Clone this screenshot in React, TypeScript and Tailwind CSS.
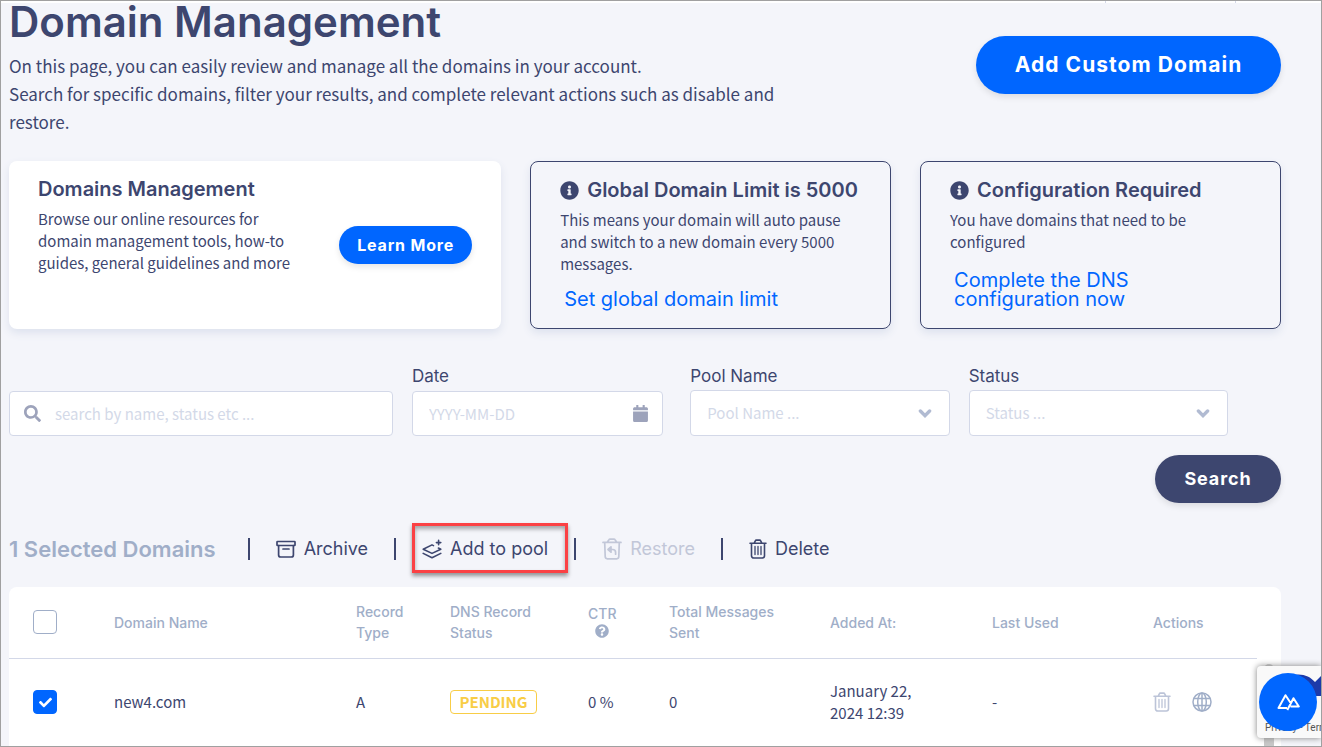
import { useState } from "react";
import type { ReactNode } from "react";
import { FaCalendar, FaCheck, FaInfoCircle, FaQuestionCircle, FaSearch } from "react-icons/fa";

const HEADERS = ["Domain Name", "Record Type", "DNS Record Status", "CTR", "Total Messages Sent", "Added At:", "Last Used", "Actions"];

const DOMAINS = [
    { name: "new4.com", type: "A", status: "PENDING", ctr: "0 %", sent: 0, addedAt: "January 22, 2024 12:39", lastUsed: "-" },
];

function ArchiveIcon() {
    return (
        <svg width="20" height="20" viewBox="0 0 20 20" fill="none" stroke="currentColor" strokeWidth="1.7" strokeLinejoin="round" strokeLinecap="round">
            <rect x="1" y="2.5" width="18" height="4" rx="0.6" />
            <path d="M2.6 6.5v9.5a2 2 0 0 0 2 2h10.8a2 2 0 0 0 2-2V6.5M7 10h6" />
        </svg>
    );
}

function PoolIcon() {
    return (
        <svg width="20" height="20" viewBox="0 0 20 20" fill="none" stroke="currentColor" strokeWidth="1.6" strokeLinejoin="round" strokeLinecap="round">
            <path d="M11.5 6.6 10 5.9 1.2 10.2 10 14.4 18.8 10.2l-2.4-1.1" />
            <path d="M1.2 14.4 10 18.8 18.8 14.4M16.6 1.4v4.4M14.4 3.6h4.4" />
        </svg>
    );
}

function TrashIcon() {
    return (
        <svg width="18" height="20" viewBox="0 0 18 20" fill="none" stroke="currentColor" strokeWidth="1.6" strokeLinejoin="round" strokeLinecap="round">
            <path d="M1 4.2h16M5.2 4.2 6.3 1.9c.2-.5.6-.8 1.1-.8h3.2c.5 0 .9.3 1.1.8l1.1 2.3M2.5 4.2v12.6a2.2 2.2 0 0 0 2.2 2.2h8.6a2.2 2.2 0 0 0 2.2-2.2V4.2" />
            <path d="M6 7.5v8M9 7.5v8M12 7.5v8" strokeWidth="1.3" />
        </svg>
    );
}

function RestoreIcon() {
    return (
        <svg width="20" height="22" viewBox="0 0 20 22" fill="none" stroke="currentColor" strokeWidth="1.7" strokeLinejoin="round" strokeLinecap="round">
            <path d="M1 4.4h18M5.2 4.2 6.8 1.9c.3-.5.8-.8 1.3-.8h3.8c.5 0 1 .3 1.3.8l1.6 2.3M2.7 4.4l.5 14.2c0 1.2.9 2.2 2.1 2.2h9.4c1.2 0 2.1-1 2.1-2.2l.5-14.2" />
            <path d="M9 8.8v5.4L6 11.5z" fill="currentColor" />
            <path d="M9 11.5h1.7c1.8 0 2.9 1.2 2.9 2.9v1.8" />
        </svg>
    );
}

function GlobeIcon() {
    return (
        <svg width="20" height="20" viewBox="0 0 20 20" fill="none" stroke="currentColor" strokeWidth="1.5">
            <circle cx="10" cy="10" r="9" />
            <ellipse cx="10" cy="10" rx="4.3" ry="9" />
            <path d="M2 6.6h16M2 13.4h16M10 1v18" />
        </svg>
    );
}

function Checkbox({ label, checked, onChange }: { label: string; checked: boolean; onChange: () => void }) {
    return (
        <label className="relative block size-6">
            <input
                type="checkbox"
                aria-label={label}
                checked={checked}
                onChange={onChange}
                className="block size-6 appearance-none rounded border border-[#a0aec8] bg-white checked:border-[#0066ff] checked:bg-[#0066ff]"
            />
            {checked && <FaCheck size={13} className="pointer-events-none absolute inset-0 m-auto text-white" />}
        </label>
    );
}

function InfoCard({ title, text, link }: { title: string; text: string; link: string }) {
    return (
        <div className="flex flex-col rounded-lg border border-[#3d466f] px-[29px] pt-4 pb-[19px] shadow-[0_4px_8px_#dde2ee]">
            <h2 className="flex items-center gap-2 text-xl leading-6 font-semibold whitespace-nowrap">
                <FaInfoCircle size={19} className="shrink-0" />
                {title}
            </h2>
            <p className="mt-[7px] font-['Noto_Sans_CJK_SC',sans-serif] text-[15px] leading-[22px]">{text}</p>
            <a href="#" className="mt-auto max-w-[240px] px-1 text-xl leading-[19px] text-[#0066ff]">{link}</a>
        </div>
    );
}

function SelectField({ id, label }: { id: string; label: string }) {
    return (
        <div>
            <label htmlFor={id} className="block text-[17px] leading-7">{label}</label>
            <div className="relative">
                <select
                    id={id}
                    defaultValue=""
                    className="block h-[46px] w-full appearance-none rounded border border-[#d3d8e8] bg-white px-4 font-['Noto_Sans_CJK_SC',sans-serif] text-[15px] text-[#d3d9e8]"
                >
                    <option value="">{label} ...</option>
                </select>
                <svg width="14" height="10" viewBox="0 0 14 10" fill="none" stroke="#b1bbd2" strokeWidth="3.4" className="pointer-events-none absolute inset-y-0 right-[18px] my-auto">
                    <path d="M2.4 3 7 7.6 11.6 3" strokeLinecap="round" />
                </svg>
            </div>
        </div>
    );
}

function Action({ icon, label, disabled, highlighted }: { icon: ReactNode; label: string; disabled?: boolean; highlighted?: boolean }) {
    return (
        <>
            <span className="h-[22px] w-0.5 bg-[#3d466f]" />
            <button disabled={disabled} className="relative flex h-6 items-center gap-2 disabled:text-[#c2c7d8]">
                {icon}
                {label}
                {highlighted && (
                    <span className="pointer-events-none absolute -top-3.5 -right-5 -bottom-3 -left-2.5 border-3 border-[#fb4144] shadow-[0_3px_4px_#0006,inset_0_3px_4px_#0005]" />
                )}
            </button>
        </>
    );
}

export default function App() {
    const [selected, setSelected] = useState<string[]>(["new4.com"]);
    const [allSelected, setAllSelected] = useState(false);

    const toggle = (name: string) => {
        setSelected(selected.includes(name) ? selected.filter((n) => n !== name) : [...selected, name]);
    };

    return (
        <div className="relative flex h-screen flex-col overflow-hidden border border-[#a0a0a0] bg-[#f4f5fa] font-[Inter,sans-serif] text-[#3d466f]">
            <div className="flex h-0.5 shrink-0 justify-end bg-white pr-[85px]">
                <div className="w-[131px] border-x border-[#d3d8e8]" />
            </div>

            <main className="flex min-h-0 flex-1 flex-col pr-10 pl-2">
                {/* Page title */}
                <header className="flex shrink-0 items-start justify-between">
                    <div className="max-w-[800px]">
                        <h1 className="text-[42px] leading-[38px] font-semibold">Domain Management</h1>
                        <p className="mt-[11px] font-['Noto_Sans_CJK_SC',sans-serif] text-[17px] leading-7">
                            On this page, you can easily review and manage all the domains in your account.
                            <br />
                            Search for specific domains, filter your results, and complete relevant actions such as disable and
                            <br />
                            restore.
                        </p>
                    </div>
                    <button className="mt-[33px] h-[58px] w-[305px] rounded-full bg-[#0066ff] text-[21px] font-bold tracking-wider text-white shadow-[0_3px_6px_#0000001a]">
                        Add Custom Domain
                    </button>
                </header>

                {/* Cards */}
                <section className="mt-[25px] grid h-[168px] shrink-0 grid-cols-[15fr_11fr_11fr] gap-[29px]">
                    <div className="flex items-start justify-between rounded-lg bg-white px-[29px] pt-4 shadow-[0_4px_8px_#dde2ee]">
                        <div className="max-w-[270px]">
                            <h2 className="text-xl leading-6 font-semibold whitespace-nowrap">Domains Management</h2>
                            <p className="mt-[7px] font-['Noto_Sans_CJK_SC',sans-serif] text-[15px] leading-[22px]">
                                Browse our online resources for domain management tools, how-to guides, general guidelines and more
                            </p>
                        </div>
                        <button className="mt-[49px] h-[38px] w-[133px] rounded-full bg-[#0066ff] text-base font-bold tracking-wider text-white shadow-[0_3px_6px_#0000001a]">
                            Learn More
                        </button>
                    </div>
                    <InfoCard
                        title="Global Domain Limit is 5000"
                        text="This means your domain will auto pause and switch to a new domain every 5000 messages."
                        link="Set global domain limit"
                    />
                    <InfoCard
                        title="Configuration Required"
                        text="You have domains that need to be configured"
                        link="Complete the DNS configuration now"
                    />
                </section>

                {/* Filters */}
                <form className="mt-[33px] shrink-0" onSubmit={(e) => e.preventDefault()}>
                    <div className="grid grid-cols-[37fr_25fr_25fr_25fr] items-end gap-[19px] pr-[53px]">
                        <div className="relative">
                            <FaSearch size={17} className="absolute inset-y-0 left-[15px] my-auto text-[#9da3bb]" />
                            <input
                                aria-label="Search domains"
                                placeholder="search by name, status etc ..."
                                className="block h-[45px] w-full rounded border border-[#d3d8e8] bg-white pr-4 pl-[45px] font-['Noto_Sans_CJK_SC',sans-serif] text-[15px] placeholder:text-[#d3d9e8]"
                            />
                        </div>
                        <div className="pr-2">
                            <label htmlFor="date" className="block text-[17px] leading-7">Date</label>
                            <div className="relative pt-px">
                                <input
                                    id="date"
                                    placeholder="YYYY-MM-DD"
                                    className="block h-[45px] w-full rounded border border-[#d3d8e8] bg-white px-4 font-['Noto_Sans_CJK_SC',sans-serif] text-[15px] placeholder:text-[#d3d9e8]"
                                />
                                <FaCalendar size={17} className="pointer-events-none absolute inset-y-0 right-3.5 my-auto text-[#9da3bb]" />
                            </div>
                        </div>
                        <SelectField id="pool" label="Pool Name" />
                        <SelectField id="status" label="Status" />
                    </div>
                    <div className="mt-[19px] flex justify-end">
                        <button className="h-12 w-[126px] rounded-full bg-[#3d466f] text-lg font-bold tracking-wider text-white shadow-[0_3px_6px_#0000001a]">
                            Search
                        </button>
                    </div>
                </form>

                {/* Bulk actions */}
                <div className="mt-[34px] flex shrink-0 items-center gap-[26px] text-lg leading-6 whitespace-nowrap">
                    <h2 className="mr-1.5 text-[22px] font-semibold text-[#a0aec8]">{selected.length} Selected Domains</h2>
                    <Action icon={<ArchiveIcon />} label="Archive" />
                    <Action icon={<PoolIcon />} label="Add to pool" highlighted />
                    <Action icon={<RestoreIcon />} label="Restore" disabled />
                    <Action icon={<TrashIcon />} label="Delete" />
                </div>

                {/* Domains table */}
                <div className="mt-[26px] min-h-0 flex-1 rounded-t-lg bg-white pr-6">
                    <table className="w-full table-fixed text-left">
                        <colgroup>
                            <col className="w-[105px]" />
                            <col className="w-[242px]" />
                            <col className="w-[94px]" />
                            <col className="w-[138px]" />
                            <col className="w-[81px]" />
                            <col className="w-[161px]" />
                            <col className="w-[162px]" />
                            <col className="w-[161px]" />
                            <col className="w-[104px]" />
                        </colgroup>
                        <thead>
                            <tr className="h-[71px] border-b border-[#d3d8e8] text-sm leading-[21px] text-[#a0aec8]">
                                <th className="pl-6">
                                    <Checkbox label="Select all domains" checked={allSelected} onChange={() => setAllSelected(!allSelected)} />
                                </th>
                                {HEADERS.map((header) => (
                                    <th key={header} className="pr-8 font-medium">
                                        {header}
                                        {header === "CTR" && <FaQuestionCircle size={14} className="mb-1 ml-[7px]" />}
                                    </th>
                                ))}
                            </tr>
                        </thead>
                        <tbody className="font-['Noto_Sans_CJK_SC',sans-serif] text-[15px] leading-[22px]">
                            {DOMAINS.map((domain) => (
                                <tr key={domain.name} className="h-[88px]">
                                    <td className="pl-6">
                                        <Checkbox label={`Select ${domain.name}`} checked={selected.includes(domain.name)} onChange={() => toggle(domain.name)} />
                                    </td>
                                    <td>{domain.name}</td>
                                    <td>{domain.type}</td>
                                    <td>
                                        <span className="inline-block w-[87px] rounded border border-[#f8cd46] text-center text-[15px] leading-[22px] font-bold text-[#f8cd46]">
                                            {domain.status}
                                        </span>
                                    </td>
                                    <td>{domain.ctr}</td>
                                    <td>{domain.sent}</td>
                                    <td className="pr-16">{domain.addedAt}</td>
                                    <td>{domain.lastUsed}</td>
                                    <td>
                                        <div className="flex items-center gap-[21px] text-[#a0aec8]">
                                            <button aria-label="Delete domain" className="text-[#bcc4d8]"><TrashIcon /></button>
                                            <button aria-label="Open domain"><GlobeIcon /></button>
                                        </div>
                                    </td>
                                </tr>
                            ))}
                        </tbody>
                    </table>
                </div>
            </main>

            {/* Table scrollbar thumb, captcha badge and accessibility button float over the page */}
            <div className="absolute right-[47px] bottom-0 h-[82px] w-2.5 rounded-t-full bg-[#c8c8c8]" />
            <div className="absolute right-0 bottom-2 h-[72px] w-16 overflow-hidden rounded-l-sm bg-[#f9f9f9] shadow-[0_0_6px_#808080]">
                <svg width="64" height="72" viewBox="0 0 64 72" className="absolute inset-0">
                    <path d="M36 9c9-2 17 1 22 7l6-6v20H46z" fill="#1c3aa9" />
                </svg>
                <div className="absolute bottom-1 left-2 font-[Roboto,sans-serif] text-[10px] leading-3 whitespace-nowrap text-[#555]">
                    <a href="#">Privacy</a> - <a href="#">Terms</a>
                </div>
            </div>
            <button aria-label="Accessibility menu" className="absolute right-1 bottom-[15px] flex size-[58px] items-center justify-center rounded-full bg-[#0066ff]">
                <svg width="23" height="18" viewBox="0 0 23 18" fill="none" stroke="white" strokeWidth="2" strokeLinejoin="round">
                    <path d="M10 15H1.5L8.5 2.2 14 10.5M10.3 17 16.5 5.2 21.8 13.5H13.5" />
                </svg>
            </button>
        </div>
    );
}
